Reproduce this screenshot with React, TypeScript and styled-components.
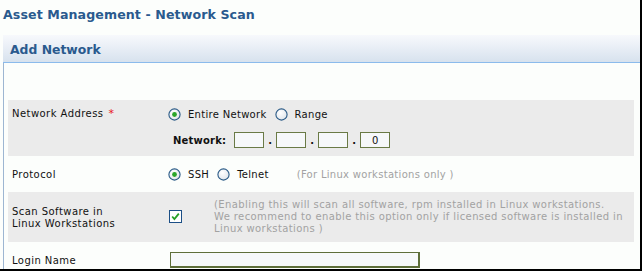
import styled, { createGlobalStyle } from 'styled-components';

const GlobalStyle = createGlobalStyle`
  html, body {
    margin: 0;
    padding: 0;
    background: #fcfefc;
  }
  body {
    font-family: 'DejaVu Sans', Verdana, sans-serif;
  }
`;

const Frame = styled.div`
  width: 640px;
  height: 269px;
  border-right: 2px solid #000;
  border-bottom: 2px solid #000;
  background: #fcfefc;
  overflow: hidden;
  display: flex;
  flex-direction: column;
`;

const PageTitle = styled.h1`
  margin: 0;
  padding: 7px 0 0 3px;
  height: 35px;
  flex-shrink: 0;
  box-sizing: border-box;
  font-size: 12.6px;
  font-weight: bold;
  color: #2a5a8e;
  letter-spacing: 0.1px;
`;

const Panel = styled.div`
  margin-left: 3px;
  flex: 1;
  display: flex;
  flex-direction: column;
`;

const PanelHeader = styled.div`
  height: 28px;
  flex-shrink: 0;
  border-bottom: 1px solid #8bbbec;
  background: linear-gradient(#f7f9fc 0%, #eef2f8 30%, #d7e2ee 100%);
  display: flex;
  align-items: center;
  padding-left: 7px;
  font-size: 12.4px;
  font-weight: bold;
  color: #2a5a8e;
  padding-top: 2px;
  box-sizing: border-box;
`;

const PanelBody = styled.div`
  flex: 1;
  border-left: 1px solid #9db6d2;
  padding: 37px 6px 0 4px;
  display: flex;
  flex-direction: column;
`;

const Row = styled.div<{ $shaded?: boolean; $height: number }>`
  display: grid;
  grid-template-columns: 160px 1fr;
  height: ${p => p.$height}px;
  flex-shrink: 0;
  background: ${p => (p.$shaded ? '#ebebeb' : 'transparent')};
  font-size: 10px;
  letter-spacing: 0.3px;
  color: #111;
`;

const Label = styled.div<{ $top: number }>`
  padding: ${p => p.$top}px 0 0 4px;
  line-height: 12px;
  letter-spacing: 0.45px;
`;

const Required = styled.span`
  color: #e8141a;
  margin-left: 5px;
  font-size: 11px;
`;

const Field = styled.div`
  display: flex;
  flex-direction: column;
`;

const Line = styled.div<{ $top?: number }>`
  display: flex;
  align-items: center;
  margin-top: ${p => p.$top ?? 0}px;
  height: 16px;
`;

const Choice = styled.label`
  display: flex;
  align-items: center;
  margin-right: 8px;
  & svg {
    margin-right: 7px;
  }
`;

const Note = styled.span`
  color: #a2a2a2;
  margin-left: 20px;
`;

const NetLabel = styled.span`
  font-weight: bold;
  margin: 0 8px 0 5px;
  letter-spacing: 0.2px;
`;

const OctetBox = styled.div`
  width: 30px;
  height: 16px;
  box-sizing: border-box;
  border: 1px solid #6a7a46;
  background: #f6f8fa;
  display: flex;
  align-items: center;
  justify-content: center;
  font-size: 10px;
`;

const Dot = styled.span`
  width: 12px;
  text-align: center;
  font-weight: bold;
`;

const CheckRow = styled.div`
  display: flex;
  align-items: flex-start;
  padding-top: 7px;
`;

const CheckWrap = styled.div`
  padding: 11px 0 0 1px;
  width: 45px;
`;

const Description = styled.div`
  color: #a2a2a2;
  line-height: 12px;
  letter-spacing: 0.4px;
  white-space: nowrap;
`;

const TextBox = styled.div`
  margin: 10px 0 0 2px;
  width: 250px;
  height: 16px;
  box-sizing: border-box;
  border: 1px solid #5e6e3a;
  border-bottom-width: 2px;
  border-right-width: 2px;
  background: #f6f8fa;
`;

function Radio({ checked }: { checked?: boolean }) {
  return (
    <svg width="13" height="13" viewBox="0 0 13 13">
      <defs>
        <radialGradient id="rg" cx="0.4" cy="0.35" r="0.7">
          <stop offset="0" stopColor="#ffffff" />
          <stop offset="1" stopColor="#dfe4ea" />
        </radialGradient>
      </defs>
      <circle cx="6.5" cy="6.5" r="5.6" fill="url(#rg)" stroke="#2b5b87" strokeWidth="1.1" />
      {checked && <circle cx="6.5" cy="6.5" r="2.4" fill="#2aa52a" />}
    </svg>
  );
}

function CheckBox() {
  return (
    <svg width="13" height="13" viewBox="0 0 13 13">
      <rect x="0.5" y="0.5" width="12" height="12" fill="#fff" stroke="#1c4f86" />
      <path d="M3.2 6.5 L5.4 9 L9.8 3.6" fill="none" stroke="#26a026" strokeWidth="1.8" />
    </svg>
  );
}

export default function App() {
  return (
    <>
      <GlobalStyle />
      <Frame>
        <PageTitle>Asset Management - Network Scan</PageTitle>
        <Panel>
          <PanelHeader>Add Network</PanelHeader>
          <PanelBody>
            <Row $shaded $height={56}>
              <Label $top={8}>
                Network Address<Required>*</Required>
              </Label>
              <Field>
                <Line $top={6}>
                  <Choice>
                    <Radio checked />
                    Entire Network
                  </Choice>
                  <Choice>
                    <Radio />
                    Range
                  </Choice>
                </Line>
                <Line $top={10}>
                  <NetLabel>Network:</NetLabel>
                  <OctetBox />
                  <Dot>.</Dot>
                  <OctetBox />
                  <Dot>.</Dot>
                  <OctetBox />
                  <Dot>.</Dot>
                  <OctetBox>0</OctetBox>
                </Line>
              </Field>
            </Row>
            <Row $height={36}>
              <Label $top={13}>Protocol</Label>
              <Field>
                <Line $top={10}>
                  <Choice>
                    <Radio checked />
                    SSH
                  </Choice>
                  <Choice>
                    <Radio />
                    Telnet
                  </Choice>
                  <Note>(For Linux workstations only )</Note>
                </Line>
              </Field>
            </Row>
            <Row $shaded $height={50}>
              <Label $top={14}>
                Scan Software in
                <br />
                Linux Workstations
              </Label>
              <CheckRow>
                <CheckWrap>
                  <CheckBox />
                </CheckWrap>
                <Description>
                  (Enabling this will scan all software, rpm installed in Linux workstations.
                  <br />
                  We recommend to enable this option only if licensed software is installed in
                  <br />
                  Linux workstations )
                </Description>
              </CheckRow>
            </Row>
            <Row $height={30}>
              <Label $top={13}>Login Name</Label>
              <Field>
                <TextBox />
              </Field>
            </Row>
          </PanelBody>
        </Panel>
      </Frame>
    </>
  );
}
